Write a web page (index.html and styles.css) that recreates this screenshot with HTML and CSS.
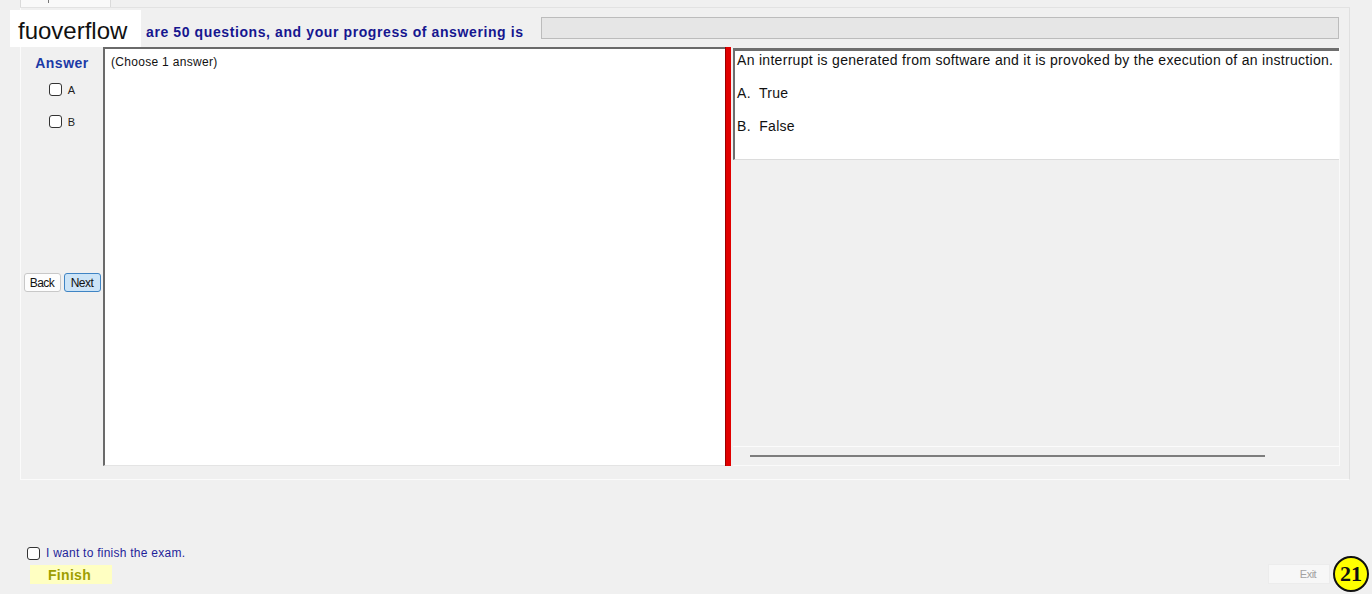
FILE: index.html
```html
<!DOCTYPE html>
<html lang="en">
<head>
    <meta charset="UTF-8">
    <meta name="viewport" content="width=device-width, initial-scale=1.0">
    <title>Exam</title>
    <link rel="stylesheet" href="styles.css">
</head>
<body>

    <!-- Tab strip -->
    <div class="tabs">
        <div class="tab"><span class="tab-mark"></span></div>
    </div>

    <!-- Exam group -->
    <div class="group">
        <div class="head">
            <span class="count">are 50 questions, and your progress of answering is</span>
            <div class="progress"></div>
        </div>

        <div class="work">
            <div class="answers">
                <div class="answers-title">Answer</div>
                <label class="opt"><input type="checkbox" class="check"> A</label>
                <label class="opt opt-b"><input type="checkbox" class="check"> B</label>
                <div class="nav">
                    <button class="btn">Back</button>
                    <button class="btn btn-next">Next</button>
                </div>
            </div>

            <div class="choice-box">(Choose 1 answer)</div>

            <div class="splitter"></div>

            <div class="question-pane">
                <div class="question">
                    <p>An interrupt is generated from software and it is provoked by the execution of an instruction.</p>
                    <p>A.&nbsp; True</p>
                    <p>B.&nbsp; False</p>
                </div>
                <div class="pane-rest">
                    <div class="scroll-area"></div>
                    <div class="hscroll"><div class="hscroll-bar"></div></div>
                </div>
            </div>
        </div>
    </div>

    <!-- Footer -->
    <div class="footer">
        <div class="finish-col">
            <label class="finish-check"><input type="checkbox" class="check"> I want to finish the exam.</label>
            <button class="btn-finish">Finish</button>
        </div>
        <button class="btn-exit">Exit</button>
    </div>

    <div class="watermark">fuoverflow</div>
    <div class="badge">21</div>

</body>
</html>
```

FILE: styles.css
```css
body {
    font-family: "Liberation Sans", Arial, sans-serif;
    margin: 0;
    width: 1372px;
    height: 594px;
    overflow: hidden;
    background-color: #f0f0f0;
    position: relative;
}
/* Tabs */
.tabs {
    height: 7px;
    margin: 0 22px 0 20px;
    border-bottom: 1px solid #e2e2e2;
    display: flex;
}
.tab {
    width: 89px;
    height: 7px;
    background-color: #f9f9f9;
    border-left: 1px solid #dadada;
    border-right: 1px solid #dadada;
    position: relative;
}
.tab-mark {
    position: absolute;
    left: 27px;
    top: 0;
    width: 1px;
    height: 3px;
    background-color: #777;
}
/* Group */
.group {
    width: 1330px;
    height: 472px;
    margin-left: 20px;
    box-sizing: border-box;
    border-left: 1px solid #fbfbfb;
    border-bottom: 1px solid #fbfbfb;
    border-right: 1px solid #e0e0e0;
    display: flex;
    flex-direction: column;
}
.head {
    height: 39px;
    display: flex;
    align-items: flex-start;
    padding-top: 9px;
    box-sizing: border-box;
}
.count {
    margin-left: 125px;
    margin-top: 7px;
    font-size: 14px;
    letter-spacing: 0.6px;
    line-height: 16px;
    font-weight: bold;
    color: #16168f;
}
.progress {
    margin-left: auto;
    margin-right: 10px;
    width: 796px;
    height: 20px;
    background-color: #e6e6e6;
    border: 1px solid #bcbcbc;
}
.work {
    display: flex;
    height: 419px;
}
/* Answer column */
.answers {
    width: 82px;
    display: flex;
    flex-direction: column;
    align-items: center;
    padding-top: 8px;
    box-sizing: border-box;
}
.answers-title {
    font-size: 14px;
    letter-spacing: 0.5px;
    line-height: 16px;
    font-weight: bold;
    color: #1c3aa6;
}
.opt {
    display: flex;
    align-items: center;
    gap: 6px;
    font-size: 11px;
    color: #222;
    margin-top: 12px;
    height: 13px;
}
.opt-b {
    margin-top: 19px;
}
.check {
    appearance: none;
    -webkit-appearance: none;
    width: 13px;
    height: 13px;
    margin: 0;
    border: 1px solid #333;
    border-radius: 3px;
    background-color: white;
    box-sizing: border-box;
}
.nav {
    display: flex;
    gap: 3px;
    margin-top: 145px;
}
.btn {
    width: 37px;
    height: 19px;
    padding: 0;
    font-family: "Liberation Sans", Arial, sans-serif;
    font-size: 12px;
    letter-spacing: -0.5px;
    color: #111;
    background-color: #fdfdfd;
    border: 1px solid #c8c8c8;
    border-radius: 3px;
}
.btn-next {
    background-color: #cce4f7;
    border-color: #3f84c4;
}
/* Choice box */
.choice-box {
    width: 622px;
    box-sizing: border-box;
    background-color: white;
    border-top: 2px solid #6a6a6a;
    border-left: 2px solid #6a6a6a;
    border-bottom: 1px solid #e4e4e4;
    padding: 6px 6px;
    font-size: 12px;
    letter-spacing: 0.3px;
    line-height: 14px;
    color: #111;
}
.splitter {
    width: 6px;
    box-sizing: border-box;
    background-color: #e10000;
    border-left: 1px solid #9c0000;
}
/* Question pane */
.question-pane {
    width: 606px;
    margin-left: 2px;
    display: flex;
    flex-direction: column;
    border-right: 1px solid #fafafa;
}
.question {
    margin-top: 1px;
    height: 112px;
    box-sizing: border-box;
    background-color: white;
    border-top: 3px solid #6e6e6e;
    border-left: 2px solid #6e6e6e;
    border-bottom: 1px solid #dcdcdc;
    padding: 1px 2px;
    font-size: 14px;
    letter-spacing: 0.3px;
    line-height: 17px;
    color: #111;
}
.question p {
    margin: 0 0 16px 0;
}
.pane-rest {
    flex: 1;
    display: flex;
    flex-direction: column;
    border-bottom: 1px solid #fafafa;
}
.scroll-area {
    flex: 1;
    border-bottom: 1px solid #fbfbfb;
}
.hscroll {
    height: 18px;
    padding: 8px 0 0 17px;
    box-sizing: border-box;
}
.hscroll-bar {
    width: 515px;
    height: 2px;
    background-color: #7d7d7d;
}
/* Footer */
.footer {
    display: flex;
    justify-content: space-between;
    align-items: flex-end;
    padding: 66px 42px 0 27px;
}
.finish-col {
    display: flex;
    flex-direction: column;
}
.finish-check {
    display: flex;
    align-items: center;
    gap: 6px;
    font-size: 12px;
    letter-spacing: 0.25px;
    color: #1f1f9a;
    height: 14px;
}
.btn-finish {
    margin: 5px 0 0 3px;
    width: 82px;
    height: 19px;
    padding: 0 3px 0 0;
    border: none;
    background-color: #ffffc2;
    font-family: "Liberation Sans", Arial, sans-serif;
    font-size: 14px;
    font-weight: bold;
    letter-spacing: 0.3px;
    color: #9e9e00;
}
.btn-exit {
    width: 62px;
    height: 20px;
    padding: 0 0 0 18px;
    border: 1px solid #ececec;
    background-color: #f7f7f7;
    font-family: "Liberation Sans", Arial, sans-serif;
    font-size: 11px;
    letter-spacing: -0.5px;
    color: #a2a2a2;
}
/* Overlays */
.watermark {
    position: absolute;
    left: 10px;
    top: 10px;
    width: 131px;
    height: 37px;
    box-sizing: border-box;
    padding-left: 8px;
    background-color: white;
    font-size: 24px;
    line-height: 41px;
    color: #111;
}
.badge {
    position: absolute;
    left: 1333px;
    top: 556px;
    width: 36px;
    height: 36px;
    box-sizing: border-box;
    border: 2px solid #111;
    border-radius: 50%;
    background-color: #ffff00;
    font-family: "Liberation Serif", "Times New Roman", serif;
    font-weight: bold;
    font-size: 22px;
    line-height: 32px;
    text-align: center;
    color: #111;
}
```
